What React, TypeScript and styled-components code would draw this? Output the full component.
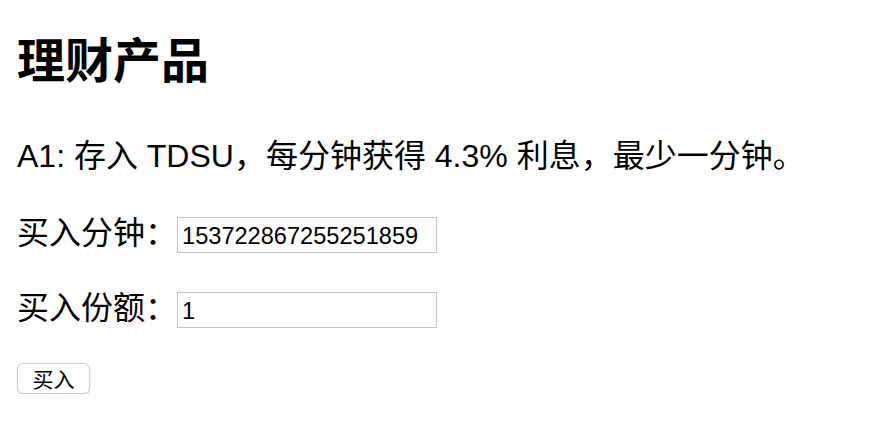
import React from "react";
import styled, { createGlobalStyle } from "styled-components";

const GlobalStyle = createGlobalStyle`
  html, body {
    margin: 0;
    padding: 0;
    background: #ffffff;
  }
  body {
    font-family: "Liberation Sans", "Noto Sans CJK SC", sans-serif;
    color: #000000;
  }
`;

const Page = styled.section`
  display: flex;
  flex-direction: column;
  align-items: flex-start;
  padding: 38px 16px 0 17px;
`;

const Title = styled.h1`
  margin: 0;
  font-size: 48px;
  line-height: 48px;
  font-weight: 700;
  font-family: "Liberation Sans", "Noto Sans CJK SC", sans-serif;
`;

const Intro = styled.p`
  margin: 54px 0 0;
  font-size: 32px;
  line-height: 32px;
  white-space: nowrap;
`;

const FormRow = styled.div<{ $gap: number }>`
  display: flex;
  align-items: center;
  margin-top: ${(p) => p.$gap}px;
  height: 36px;
`;

const Label = styled.label`
  font-size: 32px;
  line-height: 36px;
  position: relative;
  top: -2px;
`;

const Field = styled.input`
  box-sizing: border-box;
  width: 260px;
  height: 36px;
  margin: 0;
  padding: 2px 4px 0;
  border: 1px solid #c4c4c4;
  border-radius: 0;
  font-family: "Liberation Sans", sans-serif;
  font-size: 23.6px;
  color: #000;
  background: #fff;
  outline: none;
`;

const BuyButton = styled.button`
  box-sizing: border-box;
  margin-top: 35px;
  width: 73px;
  height: 31px;
  padding: 0;
  border: 1px solid #cdcdcd;
  border-radius: 6px;
  background: #ffffff;
  box-shadow: 0 1px 2px rgba(0, 0, 0, 0.15);
  font-family: "Noto Sans CJK SC", sans-serif;
  font-size: 21px;
  line-height: 29px;
  color: #000;
`;

export default function App() {
  return (
    <>
      <GlobalStyle />
      <Page>
        <Title>理财产品</Title>
        <Intro>A1: 存入 TDSU，每分钟获得 4.3% 利息，最少一分钟。</Intro>
        <FormRow $gap={45}>
          <Label>买入分钟：</Label>
          <Field defaultValue="153722867255251859" />
        </FormRow>
        <FormRow $gap={39}>
          <Label>买入份额：</Label>
          <Field defaultValue="1" />
        </FormRow>
        <BuyButton>买入</BuyButton>
      </Page>
    </>
  );
}
